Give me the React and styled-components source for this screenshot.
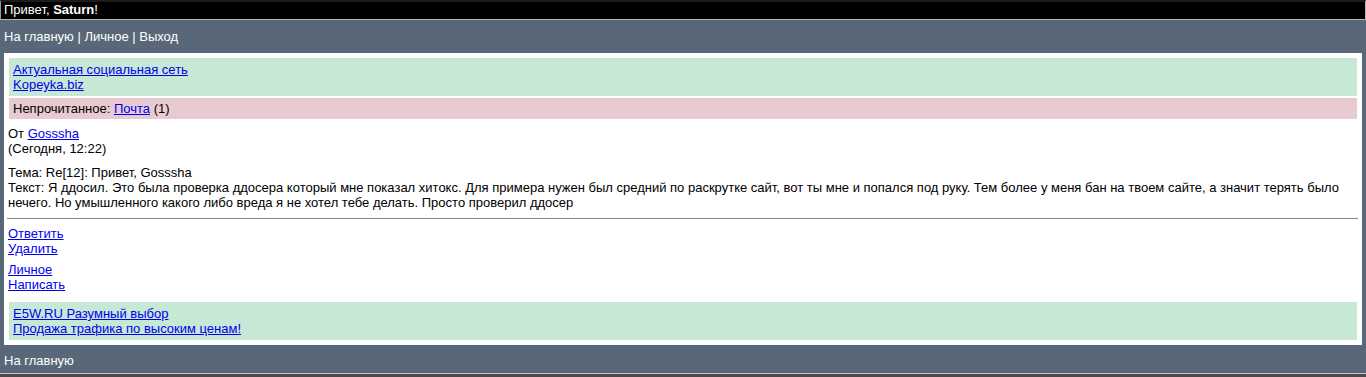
import React from "react";
import styled, { createGlobalStyle } from "styled-components";

const GlobalStyle = createGlobalStyle`
  html, body {
    margin: 0;
    padding: 0;
    background: #596878;
  }
  body {
    font-family: "Liberation Sans", Arial, sans-serif;
    font-size: 13px;
    line-height: 15px;
    color: #000;
  }
  a {
    color: #0000ee;
    text-decoration: underline;
  }
`;

const Page = styled.div`
  width: 1366px;
  display: flex;
  flex-direction: column;
`;

const Header = styled.div`
  height: 17px;
  background: #000;
  color: #fff;
  border-top: 2px solid #1c1c1c;
  border-left: 1px solid #9a9a9a;
  border-right: 1px solid #b4b4b4;
  border-bottom: 1px solid #b4b4b4;
  padding-left: 3px;
  line-height: 16px;
  b {
    font-weight: bold;
  }
`;

const NavBar = styled.div`
  background: #596878;
  color: #fff;
  padding: ${(p) => (p.bottom ? "8px 4px 5px" : "9px 4px 9px")};
  line-height: 15px;
`;

const Content = styled.div`
  background: #fff;
  margin: 0 4px;
  padding: 5px;
  display: flex;
  flex-direction: column;
`;

const Banner = styled.div`
  background: ${(p) => (p.tone === "pink" ? "#e8cbd0" : "#c8e8d6")};
  padding: ${(p) => (p.tone === "pink" ? "3px 4px" : "4px 4px")};
  margin-top: ${(p) => p.top || 0}px;
  margin-bottom: ${(p) => p.gap || 0}px;
`;

const Block = styled.div`
  margin-left: -1px;
  margin-top: ${(p) => p.top || 0}px;
`;

const Rule = styled.hr`
  border: 0;
  height: 1px;
  background: #888;
  margin: 8px -1px 7px -2px;
`;

const BottomStrip = styled.div`
  height: 4px;
  border-top: 1px solid #c8c8c8;
  background: #4b4b4b;
`;

export default function App() {
  return (
    <Page>
      <GlobalStyle />
      <Header>
        Привет, <b>Saturn</b>!
      </Header>
      <NavBar>На главную | Личное | Выход</NavBar>
      <Content>
        <Banner gap={2}>
          <a href="#">Актуальная социальная сеть</a>
          <br />
          <a href="#">Kopeyka.biz</a>
        </Banner>
        <Banner tone="pink">
          Непрочитанное: <a href="#">Почта</a> (1)
        </Banner>
        <Block top={7}>
          От <a href="#">Gosssha</a>
          <br />
          (Сегодня, 12:22)
        </Block>
        <Block top={9}>
          Тема: Re[12]: Привет, Gosssha
          <br />
          Текст: Я ддосил. Это была проверка ддосера который мне показал
          хитокс. Для примера нужен был средний по раскрутке сайт, вот ты мне и
          попался под руку. Тем более у меня бан на твоем сайте, а значит терять
          было нечего. Но умышленного какого либо вреда я не хотел тебе делать.
          Просто проверил ддосер
        </Block>
        <Rule />
        <Block>
          <a href="#">Ответить</a>
          <br />
          <a href="#">Удалить</a>
        </Block>
        <Block top={6}>
          <a href="#">Личное</a>
          <br />
          <a href="#">Написать</a>
        </Block>
        <Banner top={10}>
          <a href="#">E5W.RU Разумный выбор</a>
          <br />
          <a href="#">Продажа трафика по высоким ценам!</a>
        </Banner>
      </Content>
      <NavBar bottom>На главную</NavBar>
      <BottomStrip />
    </Page>
  );
}
